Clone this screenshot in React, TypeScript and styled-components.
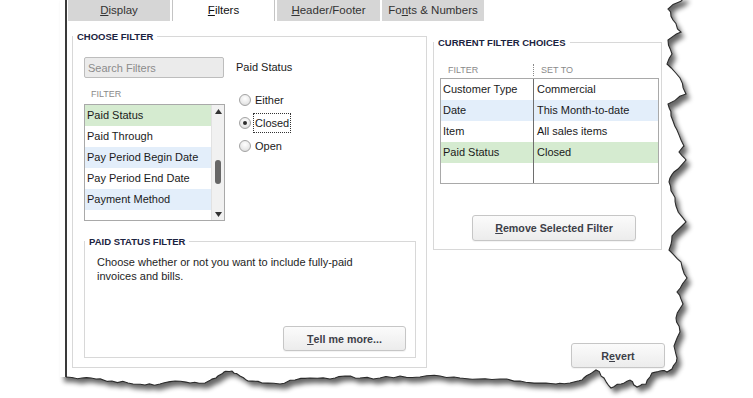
import styled, { createGlobalStyle } from 'styled-components';

const GlobalStyle = createGlobalStyle`
    body {
        margin: 0;
        background: #fff;
        font-family: "Liberation Sans", Arial, sans-serif;
        color: #1c1c1c;
    }
`;

const tabs = [
    { key: 'display', width: 102, label: <><u>D</u>isplay</> },
    { key: 'filters', width: 103, label: <><u>F</u>ilters</>, active: true },
    { key: 'header', width: 103, label: <><u>H</u>eader/Footer</> },
    { key: 'fonts', width: 102, label: <>Fo<u>n</u>ts &amp; Numbers</> },
];

const filterRows = [
    { name: 'Paid Status', tone: 'green' },
    { name: 'Paid Through', tone: 'plain' },
    { name: 'Pay Period Begin Date', tone: 'blue' },
    { name: 'Pay Period End Date', tone: 'plain' },
    { name: 'Payment Method', tone: 'blue' },
];

const choices = [
    { filter: 'Customer Type', value: 'Commercial', tone: 'plain' },
    { filter: 'Date', value: 'This Month-to-date', tone: 'blue' },
    { filter: 'Item', value: 'All sales items', tone: 'plain' },
    { filter: 'Paid Status', value: 'Closed', tone: 'green' },
    { filter: '', value: '', tone: 'plain' },
];

const radios = [
    { label: 'Either', checked: false },
    { label: 'Closed', checked: true },
    { label: 'Open', checked: false },
];

const toneColor: Record<string, string> = {
    green: '#d5ebd0',
    blue: '#e3eefa',
    plain: '#fff',
};

const Page = styled.div`
    position: relative;
    width: 753px;
    height: 398px;
    overflow: hidden;
    background: #fff;
`;

const Window = styled.div`
    margin-left: 65px;
    width: 640px;
    height: 398px;
    border-left: 2px solid #3a3a3a;
    background: #fff;
    display: flex;
    flex-direction: column;
`;

const TabBar = styled.div`
    display: flex;
    gap: 2px;
    height: 21px;
    padding-left: 1px;
`;

const Tab = styled.div<{ $active?: boolean; $width: number }>`
    box-sizing: border-box;
    width: ${ p => p.$width }px;
    height: 21px;
    line-height: 20px;
    text-align: center;
    font-size: 11.5px;
    color: ${ p => p.$active ? '#111' : '#333' };
    background: ${ p => p.$active ? '#fff' : '#d6d6d6' };
    border-left: 1px solid ${ p => p.$active ? '#c4c4c4' : '#d6d6d6' };
    border-right: 1px solid ${ p => p.$active ? '#c4c4c4' : '#d6d6d6' };

    u {
        text-underline-offset: 1px;
    }
`;

const Content = styled.div`
    display: flex;
    gap: 6px;
    padding-left: 5px;
    height: 347px;
`;

const GroupBox = styled.fieldset<{ $width: number; $height: number; $top: number }>`
    box-sizing: border-box;
    margin: ${ p => p.$top }px 0 0 0;
    padding: 0;
    min-width: 0;
    width: ${ p => p.$width }px;
    height: ${ p => p.$height }px;
    border: 1px solid #d8d8d8;
    display: flex;
    flex-direction: column;
`;

const Legend = styled.legend`
    margin-left: 0;
    padding: 0 4px;
    font-size: 9.5px;
    line-height: 11px;
    font-weight: 700;
    color: #1b2340;
`;

const ChooseBody = styled.div`
    display: flex;
    flex-direction: column;
    padding: 15px 10px 0 11px;
`;

const PickerRow = styled.div`
    display: flex;
`;

const FilterColumn = styled.div`
    width: 141px;
    display: flex;
    flex-direction: column;
`;

const SearchBox = styled.input`
    box-sizing: border-box;
    width: 140px;
    height: 21px;
    padding: 0 3px;
    border: 1px solid #bdbdbd;
    border-radius: 2px;
    background: #ebebeb;
    font-family: inherit;
    font-size: 11px;
    outline: none;

    &::placeholder {
        color: #8c8c8c;
    }
`;

const ColumnHead = styled.div`
    margin-top: 11px;
    padding-left: 7px;
    font-size: 9px;
    line-height: 11px;
    color: #8a8a8a;
`;

const ListBox = styled.div`
    box-sizing: border-box;
    margin-top: 4px;
    width: 141px;
    height: 117px;
    border: 1px solid #a9a9a9;
    display: flex;
`;

const ListRows = styled.div`
    flex: 1;
    display: flex;
    flex-direction: column;
`;

const ListRow = styled.div<{ $tone: string }>`
    height: 21px;
    line-height: 21px;
    padding-left: 2px;
    font-size: 11px;
    color: #1a1a1a;
    background: ${ p => toneColor[ p.$tone ] };
    white-space: nowrap;
`;

const ScrollBar = styled.div`
    width: 12px;
    background: #f1f1f1;
    border-left: 1px solid #e2e2e2;
    display: flex;
    flex-direction: column;
    align-items: center;
`;

const ScrollArrow = styled.div`
    height: 12px;
    display: flex;
    align-items: center;
    justify-content: center;
`;

const ScrollTrack = styled.div`
    flex: 1;
    padding-top: 43px;
`;

const ScrollThumb = styled.div`
    width: 6px;
    height: 24px;
    border-radius: 3px;
    background: #676767;
`;

const StatusColumn = styled.div`
    margin-left: 11px;
    padding-left: 3px;
    display: flex;
    flex-direction: column;
`;

const StatusTitle = styled.div`
    margin-top: 3px;
    margin-left: -3px;
    font-size: 11px;
    line-height: 14px;
    color: #1a1a1a;
`;

const RadioGroup = styled.div`
    margin-top: 14px;
    display: flex;
    flex-direction: column;
`;

const RadioRow = styled.label`
    display: flex;
    align-items: center;
    gap: 2px;
    height: 23px;
    font-size: 11px;
    color: #1a1a1a;
`;

const RadioCircle = styled.span<{ $checked: boolean }>`
    box-sizing: border-box;
    width: 12px;
    height: 12px;
    border-radius: 50%;
    border: 1px solid #a3a3a3;
    background: radial-gradient(circle at 50% 35%, #fff 0%, #e9e9e9 60%, #cfcfcf 100%);
    display: flex;
    align-items: center;
    justify-content: center;

    &::after {
        content: '';
        width: 4px;
        height: 4px;
        border-radius: 50%;
        background: ${ p => p.$checked ? '#2e2e2e' : 'transparent' };
    }
`;

const RadioLabel = styled.span<{ $focused: boolean }>`
    padding: 2px 1px;
    line-height: 14px;
    border: 1px dotted ${ p => p.$focused ? '#333' : 'transparent' };
`;

const HelpBody = styled.div`
    box-sizing: border-box;
    height: 110px;
    display: flex;
    flex-direction: column;
    padding: 8px 9px 6px 12px;
`;

const HelpText = styled.p`
    margin: 0;
    font-size: 11px;
    line-height: 14px;
    color: #1e1e1e;
    width: 280px;
`;

const Button = styled.div<{ $width: number; $height?: number }>`
    box-sizing: border-box;
    width: ${ p => p.$width }px;
    height: ${ p => p.$height ?? 25 }px;
    border: 1px solid #c6c6c6;
    border-radius: 3px;
    background: linear-gradient(#fbfbfb, #ececec);
    box-shadow: 0 1px 1px rgb(0 0 0 / 0.05);
    display: flex;
    align-items: center;
    justify-content: center;
    font-size: 10.7px;
    font-weight: 700;
    color: #3d3f48;
`;

const HelpButton = styled( Button )`
    margin-top: auto;
    align-self: flex-end;
`;

const SideColumn = styled.div`
    width: 248px;
    display: flex;
    flex-direction: column;
`;

const ChoicesBody = styled.div`
    display: flex;
    flex-direction: column;
    padding-left: 6px;
`;

const TableHead = styled.div`
    margin-top: 14px;
    height: 16px;
    display: flex;
    align-items: center;
`;

const HeadCell = styled.div<{ $width?: number; $divider?: boolean }>`
    box-sizing: border-box;
    width: ${ p => p.$width ? `${ p.$width }px` : 'auto' };
    padding-left: 7px;
    font-size: 9px;
    line-height: 12px;
    color: #8a8a8a;
    border-left: 1px dotted ${ p => p.$divider ? '#8a8a8a' : 'transparent' };
`;

const ChoicesTable = styled.div`
    width: 217px;
    border: 1px solid #a9a9a9;
    display: flex;
    flex-direction: column;
`;

const ChoiceRow = styled.div<{ $tone: string }>`
    display: grid;
    grid-template-columns: 93px 1fr;
    height: 21px;
    background: ${ p => toneColor[ p.$tone ] };
    font-size: 11px;
    color: #1a1a1a;

    &:last-child {
        height: 20px;
    }
`;

const ChoiceCell = styled.div<{ $first?: boolean }>`
    line-height: 21px;
    padding-left: ${ p => p.$first ? 2 : 3 }px;
    border-right: ${ p => p.$first ? '1px solid #6e6e6e' : 'none' };
    white-space: nowrap;
`;

const RemoveButton = styled( Button )`
    margin-top: 31px;
    margin-left: 32px;
`;

const RevertButton = styled( Button )`
    margin-top: auto;
    margin-left: 138px;
`;

const Arrow = ({ up }: { up?: boolean }) => (
    <svg width="7" height="5" viewBox="0 0 7 5">
        <path d={ up ? 'M0 5 L3.5 0 L7 5 Z' : 'M0 0 L3.5 5 L7 0 Z' } fill="#333" />
    </svg>
);

// torn paper edge along the right and bottom of the dialog
const rightEdge: [ number, number ][] = [
    [ 686, -4 ], [ 668, 9 ], [ 673, 20 ], [ 681, 32 ], [ 668, 40 ], [ 672, 54 ], [ 667, 64 ],
    [ 680, 78 ], [ 686, 94 ], [ 668, 104 ], [ 671, 116 ], [ 677, 130 ], [ 684, 146 ], [ 679, 152 ],
    [ 686, 160 ], [ 674, 172 ], [ 669, 182 ], [ 673, 194 ], [ 676, 206 ], [ 686, 222 ], [ 672, 236 ],
    [ 669, 250 ], [ 681, 262 ], [ 687, 278 ], [ 677, 292 ], [ 683, 304 ], [ 676, 318 ], [ 680, 332 ],
    [ 674, 346 ], [ 677, 358 ], [ 672, 369 ],
];

const bottomEdge: [ number, number ][] = [
    [ 667, 372 ], [ 660, 371 ], [ 652, 373 ], [ 646, 384 ], [ 637, 387 ], [ 630, 380 ], [ 621, 384 ],
    [ 611, 388 ], [ 604, 378 ], [ 596, 370 ], [ 590, 374 ], [ 582, 380 ], [ 570, 383 ], [ 556, 384 ],
    [ 540, 383 ], [ 520, 381 ], [ 500, 379 ], [ 478, 379 ], [ 460, 378 ], [ 440, 376 ], [ 420, 377 ],
    [ 400, 376 ], [ 380, 378 ], [ 360, 378 ], [ 345, 376 ], [ 330, 379 ], [ 310, 378 ], [ 295, 380 ],
    [ 280, 384 ], [ 262, 383 ], [ 248, 381 ], [ 240, 376 ], [ 232, 371 ], [ 224, 372 ], [ 216, 378 ],
    [ 205, 383 ], [ 190, 383 ], [ 175, 381 ], [ 160, 384 ], [ 145, 385 ], [ 128, 383 ], [ 112, 381 ],
    [ 96, 379 ], [ 82, 378 ], [ 66, 377 ],
];

const jagged = ( points: [ number, number ][], seed: number ) => {
    let s = seed;
    const rnd = () => {
        s = ( s * 9301 + 49297 ) % 233280;
        return s / 233280 - 0.5;
    };
    const out: [ number, number ][] = [];
    for ( let i = 0; i < points.length - 1; i++ ) {
        const [ x0, y0 ] = points[ i ];
        const [ x1, y1 ] = points[ i + 1 ];
        out.push( points[ i ] );
        for ( let k = 1; k < 3; k++ ) {
            const t = k / 3;
            out.push([ x0 + ( x1 - x0 ) * t + rnd() * 2.2, y0 + ( y1 - y0 ) * t + rnd() * 2.2 ]);
        }
    }
    out.push( points[ points.length - 1 ] );
    return out;
};

const edgePoints = [ ...jagged( rightEdge, 17 ), ...jagged( bottomEdge, 53 ) ];
const edgeLine = edgePoints.map( ( [ x, y ], i ) => `${ i ? 'L' : 'M' }${ x.toFixed( 1 ) } ${ y.toFixed( 1 ) }` ).join( ' ' );
const insideShape = `M60 -4 ${ edgeLine.replace( /^M/, 'L' ) } L60 377 Z`;
const outsideShape = `M-10 -10 H770 V410 H-10 Z ${ insideShape }`;

const EdgeOverlay = styled.svg`
    position: absolute;
    inset: 0;
    pointer-events: none;
`;

const TornEdge = () => (
    <EdgeOverlay width="753" height="398" viewBox="0 0 753 398">
        <defs>
            <clipPath id="outside">
                <path d={ outsideShape } clipRule="evenodd" />
            </clipPath>
            <filter id="soft" x="-10%" y="-10%" width="120%" height="120%">
                <feGaussianBlur stdDeviation="2.6" />
            </filter>
        </defs>
        <path d={ outsideShape } fill="#fff" fillRule="evenodd" />
        <g clipPath="url(#outside)">
            <path d={ insideShape } transform="translate(4 5)" fill="#000" opacity="0.6" filter="url(#soft)" />
        </g>
        <path d={ edgeLine } fill="none" stroke="#2b2b2b" strokeWidth="1.1" />
    </EdgeOverlay>
);

const App = () => {
    return (
        <>
            <GlobalStyle />
            <Page>
                <Window>
                    <TabBar>
                        { tabs.map( tab => (
                            <Tab key={ tab.key } $active={ tab.active } $width={ tab.width }>
                                { tab.label }
                            </Tab>
                        )) }
                    </TabBar>

                    <Content>
                        <GroupBox $width={ 355 } $height={ 337 } $top={ 10 }>
                            <Legend>CHOOSE FILTER</Legend>
                            <ChooseBody>
                                <PickerRow>
                                    <FilterColumn>
                                        <SearchBox placeholder="Search Filters" readOnly />
                                        <ColumnHead>FILTER</ColumnHead>
                                        <ListBox>
                                            <ListRows>
                                                { filterRows.map( row => (
                                                    <ListRow key={ row.name } $tone={ row.tone }>{ row.name }</ListRow>
                                                )) }
                                            </ListRows>
                                            <ScrollBar>
                                                <ScrollArrow><Arrow up /></ScrollArrow>
                                                <ScrollTrack><ScrollThumb /></ScrollTrack>
                                                <ScrollArrow><Arrow /></ScrollArrow>
                                            </ScrollBar>
                                        </ListBox>
                                    </FilterColumn>

                                    <StatusColumn>
                                        <StatusTitle>Paid Status</StatusTitle>
                                        <RadioGroup>
                                            { radios.map( radio => (
                                                <RadioRow key={ radio.label }>
                                                    <RadioCircle $checked={ radio.checked } />
                                                    <RadioLabel $focused={ radio.checked }>{ radio.label }</RadioLabel>
                                                </RadioRow>
                                            )) }
                                        </RadioGroup>
                                    </StatusColumn>
                                </PickerRow>

                                <GroupBox $width={ 332 } $height={ 122 } $top={ 15 }>
                                    <Legend>PAID STATUS FILTER</Legend>
                                    <HelpBody>
                                        <HelpText>
                                            Choose whether or not you want to include fully-paid invoices and bills.
                                        </HelpText>
                                        <HelpButton $width={ 123 }><u>T</u>ell me more...</HelpButton>
                                    </HelpBody>
                                </GroupBox>
                            </ChooseBody>
                        </GroupBox>

                        <SideColumn>
                            <GroupBox $width={ 229 } $height={ 213 } $top={ 16 }>
                                <Legend>CURRENT FILTER CHOICES</Legend>
                                <ChoicesBody>
                                    <TableHead>
                                        <HeadCell $width={ 93 }>FILTER</HeadCell>
                                        <HeadCell $divider>SET TO</HeadCell>
                                    </TableHead>
                                    <ChoicesTable>
                                        { choices.map( ( choice, i ) => (
                                            <ChoiceRow key={ i } $tone={ choice.tone }>
                                                <ChoiceCell $first>{ choice.filter }</ChoiceCell>
                                                <ChoiceCell>{ choice.value }</ChoiceCell>
                                            </ChoiceRow>
                                        )) }
                                    </ChoicesTable>
                                    <RemoveButton $width={ 164 } $height={ 26 }>
                                        <u>R</u>emove Selected Filter
                                    </RemoveButton>
                                </ChoicesBody>
                            </GroupBox>
                            <RevertButton $width={ 94 }>R<u>e</u>vert</RevertButton>
                        </SideColumn>
                    </Content>
                </Window>
                <TornEdge />
            </Page>
        </>
    );
};

export default App;
